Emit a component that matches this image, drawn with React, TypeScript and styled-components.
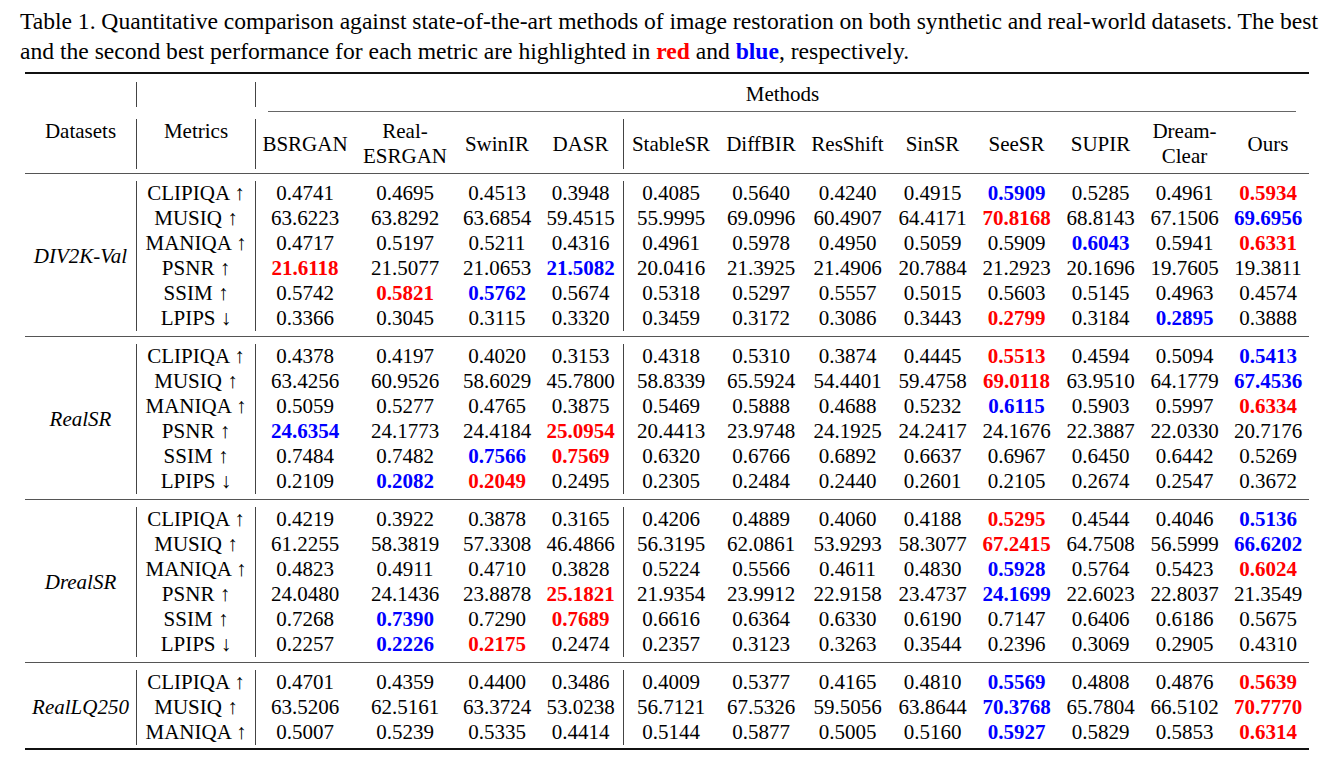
import React from 'react'
import styled, { createGlobalStyle } from 'styled-components'

const GlobalStyle = createGlobalStyle`
  body {
    margin: 0;
    background: #fff;
    color: #000;
    font-family: 'Liberation Serif', 'Times New Roman', serif;
  }
`

// column widths measured off the layout: Datasets, Metrics, then 12 methods
const COLS = '112px 119px 98px 102px 82px 86px 94px 86px 87px 83px 85px 83px 85px 82px'

const Page = styled.div`
  width: 1328px;
  box-sizing: border-box;
  padding: 6px 10px 0 20px;
  font-family: 'Liberation Serif', 'Times New Roman', serif;
`

const Caption = styled.div`
  width: 1298px;
  font-size: 23.6px;
  line-height: 30px;
`

// first caption line is stretched edge to edge, like the typeset original
const CaptionLine = styled.div<{ $fill?: boolean }>`
  text-align: ${(p) => (p.$fill ? 'justify' : 'left')};
  text-align-last: ${(p) => (p.$fill ? 'justify' : 'auto')};
  word-spacing: ${(p) => (p.$fill ? '-2px' : '0')};
`

const Mark = styled.b<{ $tone: 'red' | 'blue' }>`
  color: ${(p) => (p.$tone === 'red' ? '#ff0000' : '#0000ff')};
`

const Table = styled.div`
  width: 1284px;
  margin: 6px 0 0 5px;
  border-top: 2px solid #111;
  border-bottom: 2px solid #111;
`

const Section = styled.div<{ $pt: number; $pb: number; $rule?: boolean }>`
  display: grid;
  grid-template-columns: ${COLS};
  grid-auto-rows: 25px;
  padding: ${(p) => p.$pt}px 0 ${(p) => p.$pb}px;
  border-top: ${(p) => (p.$rule ? '1.5px solid #555' : 'none')};
`

const CMidRule = styled.div`
  display: grid;
  grid-template-columns: ${COLS};

  &::after {
    content: '';
    grid-column: 3 / -1;
    margin: 0 13px 0 12px;
    border-top: 1px solid #666;
  }
`

const Cell = styled.div<{ $bar?: boolean; $span?: number; $top?: boolean }>`
  display: flex;
  flex-direction: column;
  align-items: center;
  justify-content: ${(p) => (p.$top ? 'flex-start' : 'center')};
  grid-row: ${(p) => (p.$span ? `span ${p.$span}` : 'auto')};
  border-right: ${(p) => (p.$bar ? '1px solid #444' : 'none')};
  font-size: 21px;
  line-height: 25px;
  white-space: nowrap;
`

const Wide = styled(Cell)`
  grid-column: 3 / -1;
`

const DatasetName = styled(Cell)`
  font-style: italic;
`

const Value = styled(Cell)<{ $tone?: 'red' | 'blue' }>`
  font-weight: ${(p) => (p.$tone ? 700 : 400)};
  color: ${(p) => (p.$tone === 'red' ? '#ff0000' : p.$tone === 'blue' ? '#0000ff' : '#000')};
`

const methods = [
  ['BSRGAN'],
  ['Real-', 'ESRGAN'],
  ['SwinIR'],
  ['DASR'],
  ['StableSR'],
  ['DiffBIR'],
  ['ResShift'],
  ['SinSR'],
  ['SeeSR'],
  ['SUPIR'],
  ['Dream-', 'Clear'],
  ['Ours'],
]

// trailing r / b marks best (red) and second best (blue)
const datasets: { name: string; rows: [string, string][] }[] = [
  {
    name: 'DIV2K-Val',
    rows: [
      ['CLIPIQA ↑', '0.4741 0.4695 0.4513 0.3948 0.4085 0.5640 0.4240 0.4915 0.5909b 0.5285 0.4961 0.5934r'],
      ['MUSIQ ↑', '63.6223 63.8292 63.6854 59.4515 55.9995 69.0996 60.4907 64.4171 70.8168r 68.8143 67.1506 69.6956b'],
      ['MANIQA ↑', '0.4717 0.5197 0.5211 0.4316 0.4961 0.5978 0.4950 0.5059 0.5909 0.6043b 0.5941 0.6331r'],
      ['PSNR ↑', '21.6118r 21.5077 21.0653 21.5082b 20.0416 21.3925 21.4906 20.7884 21.2923 20.1696 19.7605 19.3811'],
      ['SSIM ↑', '0.5742 0.5821r 0.5762b 0.5674 0.5318 0.5297 0.5557 0.5015 0.5603 0.5145 0.4963 0.4574'],
      ['LPIPS ↓', '0.3366 0.3045 0.3115 0.3320 0.3459 0.3172 0.3086 0.3443 0.2799r 0.3184 0.2895b 0.3888'],
    ],
  },
  {
    name: 'RealSR',
    rows: [
      ['CLIPIQA ↑', '0.4378 0.4197 0.4020 0.3153 0.4318 0.5310 0.3874 0.4445 0.5513r 0.4594 0.5094 0.5413b'],
      ['MUSIQ ↑', '63.4256 60.9526 58.6029 45.7800 58.8339 65.5924 54.4401 59.4758 69.0118r 63.9510 64.1779 67.4536b'],
      ['MANIQA ↑', '0.5059 0.5277 0.4765 0.3875 0.5469 0.5888 0.4688 0.5232 0.6115b 0.5903 0.5997 0.6334r'],
      ['PSNR ↑', '24.6354b 24.1773 24.4184 25.0954r 20.4413 23.9748 24.1925 24.2417 24.1676 22.3887 22.0330 20.7176'],
      ['SSIM ↑', '0.7484 0.7482 0.7566b 0.7569r 0.6320 0.6766 0.6892 0.6637 0.6967 0.6450 0.6442 0.5269'],
      ['LPIPS ↓', '0.2109 0.2082b 0.2049r 0.2495 0.2305 0.2484 0.2440 0.2601 0.2105 0.2674 0.2547 0.3672'],
    ],
  },
  {
    name: 'DrealSR',
    rows: [
      ['CLIPIQA ↑', '0.4219 0.3922 0.3878 0.3165 0.4206 0.4889 0.4060 0.4188 0.5295r 0.4544 0.4046 0.5136b'],
      ['MUSIQ ↑', '61.2255 58.3819 57.3308 46.4866 56.3195 62.0861 53.9293 58.3077 67.2415r 64.7508 56.5999 66.6202b'],
      ['MANIQA ↑', '0.4823 0.4911 0.4710 0.3828 0.5224 0.5566 0.4611 0.4830 0.5928b 0.5764 0.5423 0.6024r'],
      ['PSNR ↑', '24.0480 24.1436 23.8878 25.1821r 21.9354 23.9912 22.9158 23.4737 24.1699b 22.6023 22.8037 21.3549'],
      ['SSIM ↑', '0.7268 0.7390b 0.7290 0.7689r 0.6616 0.6364 0.6330 0.6190 0.7147 0.6406 0.6186 0.5675'],
      ['LPIPS ↓', '0.2257 0.2226b 0.2175r 0.2474 0.2357 0.3123 0.3263 0.3544 0.2396 0.3069 0.2905 0.4310'],
    ],
  },
  {
    name: 'RealLQ250',
    rows: [
      ['CLIPIQA ↑', '0.4701 0.4359 0.4400 0.3486 0.4009 0.5377 0.4165 0.4810 0.5569b 0.4808 0.4876 0.5639r'],
      ['MUSIQ ↑', '63.5206 62.5161 63.3724 53.0238 56.7121 67.5326 59.5056 63.8644 70.3768b 65.7804 66.5102 70.7770r'],
      ['MANIQA ↑', '0.5007 0.5239 0.5335 0.4414 0.5144 0.5877 0.5005 0.5160 0.5927b 0.5829 0.5853 0.6314r'],
    ],
  },
]

function toneOf(v: string): 'red' | 'blue' | undefined {
  if (v.endsWith('r')) return 'red'
  if (v.endsWith('b')) return 'blue'
  return undefined
}

export default function App() {
  return (
    <Page>
      <GlobalStyle />
      <Caption>
        <CaptionLine $fill>
          Table 1. Quantitative comparison against state-of-the-art methods of image restoration on both synthetic
          and real-world datasets. The best
        </CaptionLine>
        <CaptionLine>
          and the second best performance for each metric are highlighted in <Mark $tone="red">red</Mark> and{' '}
          <Mark $tone="blue">blue</Mark>, respectively.
        </CaptionLine>
      </Caption>
      <Table>
        <Section $pt={8} $pb={4}>
          <Cell $bar />
          <Cell $bar />
          <Wide>Methods</Wide>
        </Section>
        <CMidRule />
        <Section $pt={7} $pb={4}>
          <Cell $bar $span={2} $top>
            Datasets
          </Cell>
          <Cell $bar $span={2} $top>
            Metrics
          </Cell>
          {methods.map((lines, i) => (
            <Cell key={i} $span={2} $bar={i === 3}>
              {lines.map((l) => (
                <span key={l}>{l}</span>
              ))}
            </Cell>
          ))}
        </Section>
        {datasets.map((d, si) => (
          <Section key={d.name} $pt={7} $pb={si === datasets.length - 1 ? 3 : 5} $rule>
            <DatasetName $bar $span={d.rows.length}>
              {d.name}
            </DatasetName>
            {d.rows.map(([metric, vals]) => (
              <React.Fragment key={metric}>
                <Cell $bar>{metric}</Cell>
                {vals.split(' ').map((v, i) => {
                  const tone = toneOf(v)
                  return (
                    <Value key={i} $tone={tone} $bar={i === 3}>
                      {tone ? v.slice(0, -1) : v}
                    </Value>
                  )
                })}
              </React.Fragment>
            ))}
          </Section>
        ))}
      </Table>
    </Page>
  )
}
